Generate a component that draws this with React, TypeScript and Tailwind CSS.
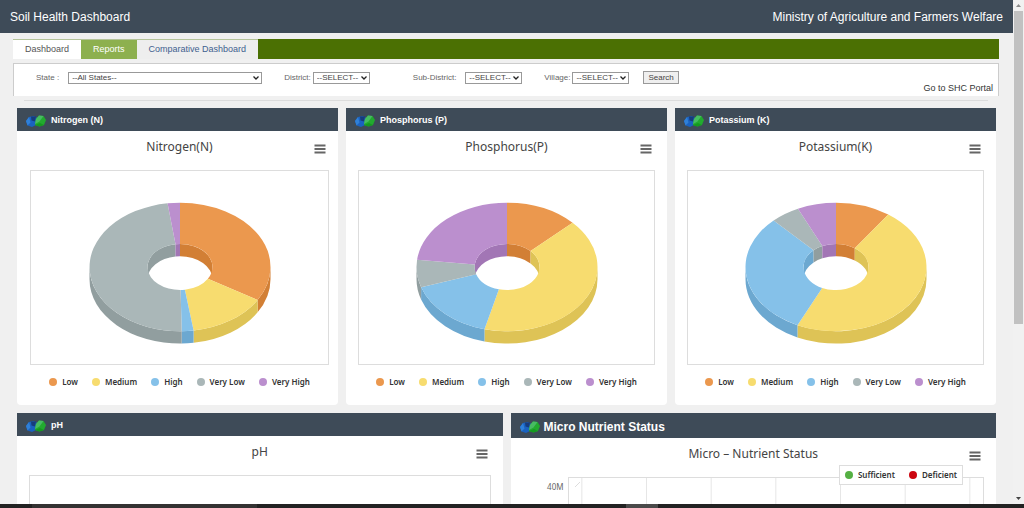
import { useState } from "react";
import type { ReactNode } from "react";

const levels = [
  { label: "Low", top: "#eb984e", side: "#d27f35" },
  { label: "Medium", top: "#f7dc6f", side: "#dec356" },
  { label: "High", top: "#85c1e9", side: "#6ca8d0" },
  { label: "Very Low", top: "#aab7b8", side: "#919e9f" },
  { label: "Very High", top: "#bb8fce", side: "#a276b5" }
];

// values are percentages, in the order of `levels`
const nutrients = [
  { name: "Nitrogen (N)", title: "Nitrogen(N)", values: [33.6, 14, 2.1, 48.1, 2.2], body: "pl-[13px] pr-[9px]" },
  { name: "Phosphorus (P)", title: "Phosphorus(P)", values: [12.9, 41.1, 15.9, 6.9, 23.2], body: "px-3" },
  { name: "Potassium (K)", title: "Potassium(K)", values: [9.8, 47.2, 30.9, 5.2, 6.9], body: "px-3" }
];

const tabs = [
  { label: "Dashboard", style: "bg-white text-[#555]" },
  { label: "Reports", style: "bg-[#8db04f] text-white" },
  { label: "Comparative Dashboard", style: "bg-[#eeeeee] text-[#3f618f]" }
];

const gridLines = ["3.1%", "18.7%", "34.3%", "49.9%", "65.5%", "81.1%", "96.7%"];

const CX = 100;
const CY = 80;
const OUTER = 90.5;
const INNER = 32.5;
const TILT = 0.71;
const DEPTH = 12.3;

function point(deg: number, r: number, dy = 0) {
  const a = (deg * Math.PI) / 180;
  return `${(CX + r * Math.sin(a)).toFixed(2)} ${(CY + dy - r * TILT * Math.cos(a)).toFixed(2)}`;
}

function topPath(from: number, to: number) {
  const large = to - from > 180 ? 1 : 0;
  return `M${point(from, OUTER)} A${OUTER} ${OUTER * TILT} 0 ${large} 1 ${point(to, OUTER)} L${point(to, INNER)} A${INNER} ${INNER * TILT} 0 ${large} 0 ${point(from, INNER)} Z`;
}

function wallPath(from: number, to: number, r: number) {
  return `M${point(from, r)} A${r} ${r * TILT} 0 0 1 ${point(to, r)} L${point(to, r, DEPTH)} A${r} ${r * TILT} 0 0 0 ${point(from, r, DEPTH)} Z`;
}

function Donut({ values, label }: { values: number[]; label: string }) {
  let sum = 0;
  const slices = values.map((value, i) => {
    const from = sum * 3.6;
    sum += value;
    return { ...levels[i], from, to: Math.min(sum, 100) * 3.6 };
  });

  const walls = slices.flatMap((s) =>
    [
      { lo: 0, hi: 90, r: INNER },
      { lo: 270, hi: 360, r: INNER },
      { lo: 90, hi: 270, r: OUTER }
    ]
      .map((w) => ({ from: Math.max(s.from, w.lo), to: Math.min(s.to, w.hi), r: w.r, color: s.side }))
      .filter((w) => w.to > w.from)
  );

  return (
    <svg viewBox="0 0 200 160" className="h-40 w-[200px]" role="img" aria-label={label}>
      {walls.map((w) => (
        <path key={`${w.r}-${w.from}`} d={wallPath(w.from, w.to, w.r)} fill={w.color} />
      ))}
      {slices.map((s) => (
        <path key={s.label} d={topPath(s.from, s.to)} fill={s.top} />
      ))}
    </svg>
  );
}

function HexLogo() {
  return (
    <svg viewBox="0 0 20 13" className="h-[13px] w-5 shrink-0" aria-hidden="true">
      <path d="M3 3 L7.5 2 L11.5 4 L10 11 L6 13 L1.5 11.5 L0 7 Z" fill="#1a62c0" />
      <path d="M3 3 L0 7 L1.5 11.5 L4.5 8.5 Z" fill="#2f80d8" />
      <path d="M5 2.5 L10 2.5 L9 7.5 L5.5 6.5 Z" fill="#173c7c" />
      <path d="M13 1.5 L17.5 2 L20 6 L18 11 L13.5 12.5 L9 11 L10 5 Z" fill="#22aa2f" />
      <path d="M13 1.5 L10 5 L9 10 L13.5 7.5 L17.5 2 Z" fill="#47bb62" />
      <path d="M9 11 L13.5 12.5 L18 11 L14 9 Z" fill="#149a1f" />
    </svg>
  );
}

function MenuButton() {
  return (
    <button type="button" aria-label="Chart context menu" className="absolute right-[3px] top-[13px]">
      <svg viewBox="0 0 12 10" className="h-2.5 w-3" stroke="#666" strokeWidth="2">
        <path d="M0.5 1.5 H11.5 M0.5 5 H11.5 M0.5 8.5 H11.5" />
      </svg>
    </button>
  );
}

function Panel({ name, large, children }: { name: string; large?: boolean; children: ReactNode }) {
  return (
    <section className="min-w-0 flex-1 rounded-b-sm bg-white">
      <h2
        className={
          large
            ? "flex h-[25px] items-center gap-1 bg-[#3e4b58] px-[9px] pt-0.5 text-xs font-bold text-white"
            : "flex h-[23px] items-center gap-[5px] bg-[#3e4b58] px-[9px] pt-0.5 text-[9px] font-bold text-white"
        }
      >
        <HexLogo />
        {name}
      </h2>
      {children}
    </section>
  );
}

function ChartTitle({ children }: { children: ReactNode }) {
  return (
    <div className="relative">
      <h3 className="h-[39px] pt-2 text-center font-['Noto_Sans'] text-xs leading-4 text-[#444]">{children}</h3>
      <MenuButton />
    </div>
  );
}

function Dot({ color }: { color: string }) {
  return <span className="size-2 rounded-full" style={{ backgroundColor: color }} />;
}

function Field({ id, label, option, width, gap }: { id: string; label: string; option: string; width: string; gap: string }) {
  return (
    <div className={`flex items-center ${gap}`}>
      <label htmlFor={id} className="whitespace-nowrap text-[#666]">
        {label}
      </label>
      <div className={`relative ${width}`}>
        <select id={id} className="block h-3 w-full appearance-none border border-[#999] bg-white pl-[3px] leading-[10px] text-[#444]">
          <option>{option}</option>
        </select>
        <svg viewBox="0 0 6 4" className="pointer-events-none absolute right-[3px] top-1 h-1 w-1.5" fill="none" stroke="#222" strokeWidth="1.3">
          <path d="M0.5 0.5 L3 3 L5.5 0.5" />
        </svg>
      </div>
    </div>
  );
}

export default function App() {
  const [active, setActive] = useState("Dashboard");

  return (
    <div className="flex h-screen flex-col overflow-hidden bg-[#f0f0f0] font-['Liberation_Sans',sans-serif]">
      <div className="flex min-h-0 flex-1">
        <div className="min-w-0 flex-1 overflow-hidden">
          <header className="flex h-[33px] items-center justify-between bg-[#3e4b58] px-2.5 text-xs text-white">
            <h1>Soil Health Dashboard</h1>
            <p>Ministry of Agriculture and Farmers Welfare</p>
          </header>

          <main className="pl-[13px] pr-3.5 pt-1.5">
            <nav className="flex h-5 bg-[#4b7003] text-[9px]">
              {tabs.map((tab) => (
                <button
                  key={tab.label}
                  type="button"
                  aria-pressed={active === tab.label}
                  onClick={() => setActive(tab.label)}
                  className={`border-t border-t-[#b5c49a] px-3 ${tab.style}`}
                >
                  {tab.label}
                </button>
              ))}
            </nav>

            <div className="mt-1 h-[33px] border border-b-0 border-[#ccc] bg-white">
              <form className="flex items-center pl-[22px] pt-[7px] text-[8px] leading-3" onSubmit={(e) => e.preventDefault()}>
                <Field id="state" label="State :" option="--All States--" width="w-[194px]" gap="gap-[9px]" />
                <div className="ml-[22px] flex items-center">
                  <Field id="district" label="District:" option="--SELECT--" width="w-[57px]" gap="gap-0.5" />
                </div>
                <div className="ml-[43px] flex items-center">
                  <Field id="sub-district" label="Sub-District:" option="--SELECT--" width="w-[57px]" gap="gap-[9px]" />
                </div>
                <div className="ml-[22px] flex items-center">
                  <Field id="village" label="Village:" option="--SELECT--" width="w-[57px]" gap="gap-0.5" />
                </div>
                <button type="submit" className="ml-3.5 border border-[#999] bg-[#efefef] px-1 leading-[11px] text-[#444]">
                  Search
                </button>
              </form>
              <div className="flex justify-end pr-[5px] text-[9px] leading-[9px] text-[#333]">
                <a href="#portal">Go to SHC Portal</a>
              </div>
            </div>

            <hr className="mx-[11px] mt-1 border-[#dcdcdc]" />

            <div className="ml-1 mr-[3px] mt-[7px] flex gap-2">
              {nutrients.map((n) => (
                <Panel key={n.name} name={n.name}>
                  <div className={n.body}>
                    <ChartTitle>{n.title}</ChartTitle>
                    <div className="flex h-[195px] justify-center border border-[#ddd] pt-4">
                      <Donut values={n.values} label={n.title} />
                    </div>
                    <ul className="flex h-10 justify-center gap-3.5 pt-2.5 font-['Noto_Sans'] text-[8px] font-semibold leading-[14px] text-[#333]">
                      {levels.map((level) => (
                        <li key={level.label} className="flex h-3.5 items-center gap-[5px] whitespace-nowrap">
                          <Dot color={level.top} />
                          {level.label}
                        </li>
                      ))}
                    </ul>
                  </div>
                </Panel>
              ))}
            </div>

            <div className="ml-1 mr-[3px] mt-2 flex gap-2">
              <Panel name="pH">
                <div className="px-3">
                  <ChartTitle>pH</ChartTitle>
                  <div className="h-40 border border-[#ddd]" />
                </div>
              </Panel>

              <Panel name="Micro Nutrient Status" large>
                <div className="px-3">
                  <ChartTitle>Micro – Nutrient Status</ChartTitle>
                  <div className="relative flex gap-1">
                    <div className="w-[41px] pt-1 text-right font-['Noto_Sans'] text-[8px] leading-3 text-[#666]">40M</div>
                    <svg className="h-40 min-w-0 flex-1 border border-[#ddd]" aria-hidden="true">
                      <path d="M6 9 L11 4" stroke="#ddd" />
                      {gridLines.map((x) => (
                        <line key={x} x1={x} x2={x} y1="0" y2="160" stroke="#e6e6e6" />
                      ))}
                    </svg>
                    <ul className="absolute -top-3 right-[21px] flex h-5 items-center gap-3.5 border border-[#ddd] bg-white px-[5px] font-['Noto_Sans'] text-[8px] font-semibold text-[#333]">
                      <li className="flex items-center gap-[5px]">
                        <Dot color="#55b043" />
                        Sufficient
                      </li>
                      <li className="flex items-center gap-[5px]">
                        <Dot color="#cc0610" />
                        Deficient
                      </li>
                    </ul>
                  </div>
                </div>
              </Panel>
            </div>
          </main>
        </div>

        <div className="flex w-[11px] flex-col items-center bg-[#f1f1f1]" aria-hidden="true">
          <svg viewBox="0 0 11 11" className="h-[11px] w-[11px] shrink-0" fill="#8a8a8a">
            <path d="M3 7 L5.5 4 L8 7 Z" />
          </svg>
          <div className="min-h-0 w-full flex-1 px-px">
            <div className="h-[65%] bg-[#c1c1c1]" />
          </div>
          <svg viewBox="0 0 11 11" className="h-[11px] w-[11px] shrink-0" fill="#444">
            <path d="M3 4 L5.5 7 L8 4 Z" />
          </svg>
        </div>
      </div>

      <div className="flex h-1 shrink-0 bg-[#222]">
        <div className="ml-8 w-[22%] bg-[#343232]" />
        <div className="ml-[36%] w-8 bg-[#4a4a4a]" />
      </div>
    </div>
  );
}
